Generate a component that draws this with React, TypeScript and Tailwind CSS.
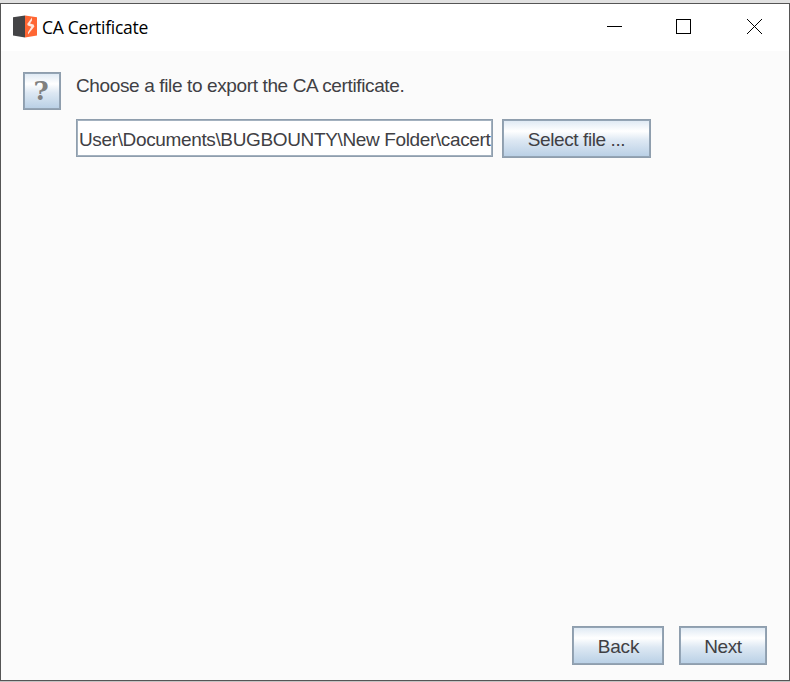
import React from "react";

const face =
  "border border-[#8f9ead] shadow-[inset_0_0_0_1px_#93a4b5] bg-[linear-gradient(to_bottom,#dde8f3_0%,#ffffff_30%,#dde8f3_55%,#b8cfe5_100%)]";

function MetalButton({ label, box, text }: { label: string; box: string; text: string }) {
  return (
    <button className={`flex items-center justify-center pt-0.5 ${face} ${box}`}>
      <span className={`whitespace-pre ${text}`}>{label}</span>
    </button>
  );
}

function AppIcon() {
  return (
    <svg width="24" height="24" viewBox="0 0 24 24" className="shrink-0">
      <path d="M0 2.2 12 0.6v22L0 20.4z" fill="#444446" />
      <path d="M12 0.6l12 1.6v18.2L12 22.6z" fill="#ff6633" />
      <path d="M19 2.6L14.2 9l.6 1.6 3.6 1.2L15 17.2v2.2l6.4-8-.8-1.8-3.6-1.2L19 5.4z" fill="#ffe6dc" />
    </svg>
  );
}

function TitleBar() {
  return (
    <header className="flex h-[47px] shrink-0 items-start bg-white pl-3">
      <div className="flex h-[46px] items-center">
        <AppIcon />
        <h1 className="-mt-px ml-[5px] whitespace-pre font-['Open_Sans',sans-serif] text-[17.5px] leading-[22px] tracking-[-0.27px] text-black">
          CA Certificate
        </h1>
      </div>
      <svg width="160" height="16" viewBox="0 0 160 16" className="ml-auto mr-[22px] mt-[15px]" fill="none" stroke="#000" shapeRendering="crispEdges">
        <path d="M0 7.5h15" />
        <rect x="69.5" y="0.5" width="14" height="14" />
        <path d="M140 0l15 15m0-15l-15 15" shapeRendering="auto" />
      </svg>
    </header>
  );
}

export default function App() {
  return (
    <div className="flex h-[682px] w-[790px] flex-col overflow-hidden bg-[#c4c2c2] font-['Liberation_Sans',Arial,sans-serif] text-[#404044]">
      <div className="h-[3px] shrink-0 bg-[#e1e1e1]" />
      <div className="flex h-[678px] shrink-0 flex-col border border-[#555555] bg-[#fbfbfb]">
        <TitleBar />
        <main className="flex flex-1 flex-col">
          <section className="flex pl-[22px] pt-[21px]">
            <button className={`flex h-[38px] w-[38px] items-center justify-center ${face}`}>
              <span className="mr-0.5 font-['DejaVu_Serif',serif] text-[26px] font-bold leading-none text-[#808080]">?</span>
            </button>
            <div className="ml-[15px]">
              <p className="h-[47px] whitespace-pre pt-[3px] text-[19px] leading-[22px] tracking-[-0.37px]">Choose a file to export the CA certificate.</p>
              <div className="flex gap-[9px]">
                <div className="flex h-[38px] w-[417px] items-center border border-[#8f9ead] bg-white pl-0.5 pt-[3px] shadow-[inset_0_0_0_1px_#a3b1bf]">
                  <span className="whitespace-pre text-[19px] leading-[22px] tracking-[-0.36px]">User\Documents\BUGBOUNTY\New Folder\cacert</span>
                </div>
                <MetalButton label="Select file ..." box="h-[39px] w-[149px]" text="text-[19px] leading-[22px] tracking-[-0.4px]" />
              </div>
            </div>
          </section>
          <footer className="mt-auto flex justify-end gap-[15px] pb-[15px] pr-[22px]">
            <MetalButton label="Back" box="h-[39px] w-[92px]" text="text-[19px] leading-[22px] tracking-[-0.2px] pl-px" />
            <MetalButton label="Next" box="h-[39px] w-[88px]" text="text-[19px] leading-[22px] tracking-[-0.4px]" />
          </footer>
        </main>
      </div>
    </div>
  );
}
